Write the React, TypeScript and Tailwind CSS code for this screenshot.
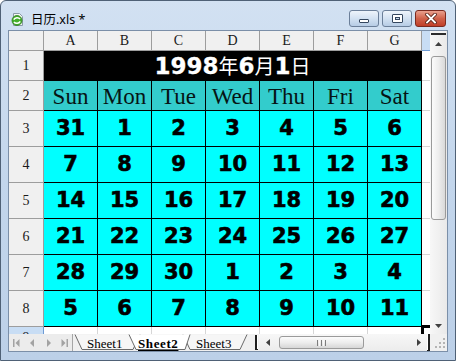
import React from 'react';

const cols = ['A', 'B', 'C', 'D', 'E', 'F', 'G'];
const days = ['Sun', 'Mon', 'Tue', 'Wed', 'Thu', 'Fri', 'Sat'];
const weeks = [
  [31, 1, 2, 3, 4, 5, 6],
  [7, 8, 9, 10, 11, 12, 13],
  [14, 15, 16, 17, 18, 19, 20],
  [21, 22, 23, 24, 25, 26, 27],
  [28, 29, 30, 1, 2, 3, 4],
  [5, 6, 7, 8, 9, 10, 11],
];

const hdr =
  "flex items-center justify-center border-r border-b border-[#9d9d9d] bg-[#f0f0f0] text-[14px] leading-none text-[#1a1a1a] font-['Liberation_Serif',serif]";
const blank = 'border-b border-[#d6d6d6] bg-white';

function SheetIcon() {
  return (
    <svg width="13" height="13" viewBox="0 0 13 13">
      <path d="M2.5 0.5h6l3 3v9h-9z" fill="#f4f8f2" stroke="#8a9aa8" />
      <circle cx="6" cy="7.5" r="5" fill="#43b02a" />
      <circle cx="6" cy="7.5" r="5" fill="none" stroke="#2f7d1f" strokeWidth="0.8" />
      <path d="M2.8 6.6c1.2-2.4 4.8-2.6 6.2-0.6M9.2 8.4c-1.2 2.4-4.8 2.6-6.2 0.6" stroke="#fff" strokeWidth="1.5" fill="none" />
    </svg>
  );
}

function Tri({ dir, color = '#4a4a4a' }: { dir: 'up' | 'down' | 'left' | 'right'; color?: string }) {
  const d = {
    up: 'M0 4L3.5 0L7 4Z',
    down: 'M0 0L7 0L3.5 4Z',
    left: 'M4 0L4 7L0 3.5Z',
    right: 'M0 0L4 3.5L0 7Z',
  }[dir];
  const vert = dir === 'up' || dir === 'down';
  return (
    <svg width={vert ? 7 : 4} height={vert ? 4 : 7} viewBox={vert ? '0 0 7 4' : '0 0 4 7'}>
      <path d={d} fill={color} />
    </svg>
  );
}

function NavIcon({ kind }: { kind: 'first' | 'prev' | 'next' | 'last' }) {
  return (
    <div className="flex w-[16px] items-center justify-center">
      <svg width="7" height="8" viewBox="0 0 7 8">
        {kind === 'first' && <path d="M0 0h1.5v8H0zM6.5 0v8L2.5 4z" fill="#a3a3a3" />}
        {kind === 'prev' && <path d="M5 0v8L1 4z" fill="#a3a3a3" />}
        {kind === 'next' && <path d="M2 0v8l4-4z" fill="#a3a3a3" />}
        {kind === 'last' && <path d="M0.5 0v8l4-4zM5.5 0H7v8H5.5z" fill="#a3a3a3" />}
      </svg>
    </div>
  );
}

function TitleBar() {
  return (
    <div className="flex h-[29px] items-start">
      <div className="ml-[10px] mt-[12px]">
        <SheetIcon />
      </div>
      <span className="ml-[7px] mt-[11px] text-[12.5px] leading-[16px] text-black font-['Noto_Sans','Noto_Sans_CJK_SC',sans-serif]">
        日历.xls *
      </span>
      <div className="ml-auto mr-[9px] mt-[9px] flex gap-[3px]">
        <div className="flex h-[17px] w-[30px] items-end justify-center rounded-[3px] border border-[#6b7f99] bg-gradient-to-b from-[#eef4fb] via-[#d3e2f2] to-[#b7cce5] pb-[3px]">
          <div className="h-[4px] w-[10px] rounded-[1px] border border-[#34465e] bg-white" />
        </div>
        <div className="flex h-[17px] w-[30px] items-center justify-center rounded-[3px] border border-[#6b7f99] bg-gradient-to-b from-[#eef4fb] via-[#d3e2f2] to-[#b7cce5]">
          <div className="flex h-[9px] w-[11px] items-center justify-center rounded-[1px] border border-[#34465e] bg-white">
            <div className="h-[3px] w-[5px] border border-[#34465e] bg-[#c9d8ea]" />
          </div>
        </div>
        <div className="flex h-[17px] w-[31px] items-center justify-center rounded-[3px] border border-[#7a2a1f] bg-gradient-to-b from-[#e9a08e] via-[#d0624b] to-[#c03d26]">
          <svg width="12" height="11" viewBox="0 0 12 11">
            <path d="M2 1.5l8 8M10 1.5l-8 8" stroke="#5a2418" strokeWidth="3.6" strokeLinecap="square" />
            <path d="M2 1.5l8 8M10 1.5l-8 8" stroke="#fff" strokeWidth="1.8" strokeLinecap="square" />
          </svg>
        </div>
      </div>
    </div>
  );
}

function Grid() {
  const num =
    "flex items-center justify-center border-r border-b border-black bg-[#00ffff] text-[21px] font-bold leading-none text-black [-webkit-text-stroke:0.6px_#000] font-['DejaVu_Sans',sans-serif]";
  const big = "text-[23px] font-bold leading-none [-webkit-text-stroke:0.3px_#fff] font-['DejaVu_Sans',sans-serif]";
  const cjk = "text-[20px] leading-none font-['Noto_Sans_CJK_SC',sans-serif]";
  return (
    <div className="relative grid w-[421px] grid-cols-[35px_repeat(7,54px)_8px] grid-rows-[20px_30px_30px_repeat(6,36px)_7px] overflow-hidden bg-white">
      {/* column headers */}
      <div className={hdr} />
      {cols.map((c) => (
        <div key={c} className={hdr}>
          {c}
        </div>
      ))}
      <div className="border-b border-[#6e9bd4] bg-[#c8ddf4]" />

      {/* row 1 */}
      <div className={hdr}>1</div>
      <div className="col-span-7 flex items-center justify-center border-r border-b border-black bg-black pt-[1px] text-white">
        <span className={big}>1998</span>
        <span className={cjk}>年</span>
        <span className={big}>6</span>
        <span className={cjk}>月</span>
        <span className={big}>1</span>
        <span className={cjk}>日</span>
      </div>
      <div className={blank} />

      {/* row 2 */}
      <div className={hdr}>2</div>
      {days.map((d) => (
        <div
          key={d}
          className="flex items-center justify-center border-r border-b border-black bg-[#33cccc] pt-[2px] text-[23px] leading-none text-[#061414] font-['Liberation_Serif',serif]"
        >
          {d}
        </div>
      ))}
      <div className={blank} />

      {/* rows 3-8 */}
      {weeks.map((w, i) => (
        <React.Fragment key={i}>
          <div className={hdr}>{i + 3}</div>
          {w.map((n, j) => (
            <div key={j} className={num}>
              {n}
            </div>
          ))}
          <div className={blank} />
        </React.Fragment>
      ))}

      {/* row 9 (cut off) */}
      <div className="flex justify-center overflow-hidden border-r border-[#6e9bd4] bg-[#c8ddf4] pt-[4px] text-[14px] leading-none text-[#1a1a1a] font-['Liberation_Serif',serif]">
        9
      </div>
      {cols.map((c) => (
        <div key={c} className="border-r border-[#d6d6d6] bg-white" />
      ))}
      <div className="bg-white" />

      {/* active cell corner (H9) */}
      <div className="absolute left-[412px] top-[294px] h-[9px] w-[9px] border-l-[3px] border-t-[3px] border-black" />
    </div>
  );
}

function VScroll() {
  return (
    <div className="flex w-[17px] flex-col bg-gradient-to-r from-[#f7f7f7] to-[#e9e9e9]">
      <div className="mx-[1px] h-[4px] border-b-[2px] border-[#2b2b2b] bg-[#f4f4f4]" />
      <div className="flex h-[17px] items-center justify-center">
        <Tri dir="up" color="#404040" />
      </div>
      <div className="flex-1 px-[1px] pt-[4px]">
        <div className="h-[164px] rounded-[3px] border border-[#9a9a9a] bg-gradient-to-r from-[#fbfbfb] via-[#ededed] to-[#d9d9d9]" />
      </div>
      <div className="flex h-[17px] items-center justify-center">
        <Tri dir="down" color="#404040" />
      </div>
    </div>
  );
}

function Tabs() {
  return (
    <div className="relative h-[17px] w-[180px]">
      <svg className="absolute inset-0" width="180" height="17" viewBox="0 0 180 17">
        <path d="M110 0.5L117 15.5H167L174 0.5" fill="#f6f6f6" stroke="#6a6a6a" />
        <path d="M2 0.5L9 15.5H60L67 0.5" fill="#f6f6f6" stroke="#6a6a6a" />
        <path d="M56 0.5L63 15.5H112L117 0.5Z" fill="#fff" stroke="none" />
        <path d="M56 0.5L63 15.5H112L117 0.5" fill="none" stroke="#6a6a6a" />
      </svg>
      <div className="relative flex h-[17px] items-center pl-[14px] pt-[1px] text-[13px] leading-none text-black font-['Liberation_Serif',serif]">
        <span className="w-[36px]">Sheet1</span>
        <span className="ml-[15px] w-[44px] font-bold tracking-[0.6px] underline underline-offset-2">Sheet2</span>
        <span className="ml-[14px] w-[40px]">Sheet3</span>
      </div>
    </div>
  );
}

function BottomBar() {
  return (
    <div className="flex h-[17px] bg-[#f0f0f0]">
      <div className="flex w-[64px] border-r border-[#a6a6a6] bg-[#ececec]">
        <NavIcon kind="first" />
        <NavIcon kind="prev" />
        <NavIcon kind="next" />
        <NavIcon kind="last" />
      </div>
      <Tabs />
      <div className="flex w-[6px] justify-center py-[1px]">
        <div className="w-[3px] border-l-[2px] border-b border-[#1e1e1e] bg-white" />
      </div>
      <div className="flex w-[168px] items-stretch bg-gradient-to-b from-[#f7f7f7] to-[#ececec]">
        <div className="flex w-[17px] items-center justify-center">
          <Tri dir="left" color="#404040" />
        </div>
        <div className="flex-1 py-[2px] pl-[3px]">
          <div className="flex h-full w-[85px] items-center justify-center gap-[1px] rounded-[3px] border border-[#9a9a9a] bg-gradient-to-b from-[#fbfbfb] via-[#ededed] to-[#d6d6d6]">
            <div className="h-[6px] w-[1px] bg-[#7d7d7d]" />
            <div className="h-[6px] w-[1px] bg-[#f8f8f8]" />
            <div className="h-[6px] w-[1px] bg-[#7d7d7d]" />
            <div className="h-[6px] w-[1px] bg-[#f8f8f8]" />
            <div className="h-[6px] w-[1px] bg-[#7d7d7d]" />
          </div>
        </div>
        <div className="flex w-[17px] items-center justify-center">
          <Tri dir="right" color="#404040" />
        </div>
      </div>
      <div className="w-[3px] border-r-[2px] border-b border-[#1e1e1e] bg-white" />
      <div className="flex w-[17px] items-end justify-end pb-[2px] pr-[1px]">
        <svg width="11" height="11" viewBox="0 0 11 11">
          {[
            [8, 0],
            [4, 4],
            [8, 4],
            [0, 8],
            [4, 8],
            [8, 8],
          ].map(([x, y], i) => (
            <rect key={i} x={x} y={y} width="2" height="2" fill="#b4b4b4" />
          ))}
        </svg>
      </div>
    </div>
  );
}

export default function App() {
  return (
    <div className="h-[361px] w-[456px] overflow-hidden rounded-t-[6px] border border-[#4f6176] bg-gradient-to-b from-[#d2e1f2] via-[#c3d6ec] to-[#bcd0e8]">
      <TitleBar />
      <div className="mx-[7px] flex flex-col border border-[#7b8fa8] bg-white">
        <div className="flex h-[303px]">
          <Grid />
          <VScroll />
        </div>
        <BottomBar />
      </div>
    </div>
  );
}
